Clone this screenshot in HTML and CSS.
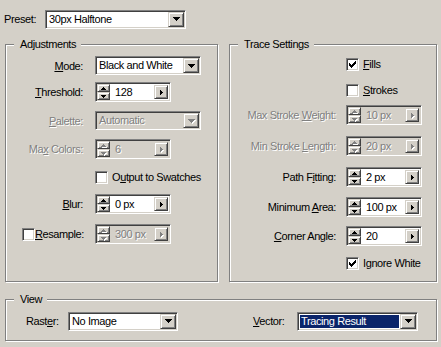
FILE: index.html
```html
<!DOCTYPE html>
<html>
<head>
<meta charset="utf-8">
<link rel="stylesheet" href="styles.css">
</head>
<body>
<div class="dlg">
  <div class="preset-row">
    <span class="lbl">Preset:</span>
    <div class="combo"><span class="combo-text">30px Halftone</span><span class="btn combo-btn"><svg width="7" height="4" viewBox="0 0 7 4"><path d="M0 0h7v1H0zM1 1h5v1H1zM2 2h3v1H2zM3 3h1v1H3z"/></svg></span></div>
  </div>

  <div class="groups">
    <div class="group adj">
      <span class="gtitle">Adjustments</span>
      <div class="adj-grid">
        <span class="lbl r"><u>M</u>ode:</span>
        <div class="combo"><span class="combo-text">Black and White</span><span class="btn combo-btn"><svg width="7" height="4" viewBox="0 0 7 4"><path d="M0 0h7v1H0zM1 1h5v1H1zM2 2h3v1H2zM3 3h1v1H3z"/></svg></span></div>

        <span class="lbl r"><u>T</u>hreshold:</span>
        <div class="spin"><div class="spin-ud"><span class="btn sbtn"><svg width="5" height="3" viewBox="0 0 5 3"><path d="M2 0h1v1H2zM1 1h3v1H1zM0 2h5v1H0z"/></svg></span><span class="btn sbtn"><svg width="5" height="3" viewBox="0 0 5 3"><path d="M0 0h5v1H0zM1 1h3v1H1zM2 2h1v1H2z"/></svg></span></div><span class="spin-val">128</span><span class="btn spin-btn"><svg width="3" height="5" viewBox="0 0 3 5"><path d="M0 0h1v5H0zM1 1h1v3H1zM2 2h1v1H2z"/></svg></span></div>

        <span class="lbl r dis"><u>P</u>alette:</span>
        <div class="combo disabled"><span class="combo-text">Automatic</span><span class="btn combo-btn"><svg width="7" height="4" viewBox="0 0 7 4"><path d="M0 0h7v1H0zM1 1h5v1H1zM2 2h3v1H2zM3 3h1v1H3z"/></svg></span></div>

        <span class="lbl r dis">Ma<u>x</u> Colors:</span>
        <div class="spin disabled"><div class="spin-ud"><span class="btn sbtn"><svg width="5" height="3" viewBox="0 0 5 3"><path d="M2 0h1v1H2zM1 1h3v1H1zM0 2h5v1H0z"/></svg></span><span class="btn sbtn"><svg width="5" height="3" viewBox="0 0 5 3"><path d="M0 0h5v1H0zM1 1h3v1H1zM2 2h1v1H2z"/></svg></span></div><span class="spin-val">6</span><span class="btn spin-btn"><svg width="3" height="5" viewBox="0 0 3 5"><path d="M0 0h1v5H0zM1 1h1v3H1zM2 2h1v1H2z"/></svg></span></div>

        <span></span>
        <div class="chkrow"><span class="chk"></span><span class="nowrap">O<u>u</u>tput to Swatches</span></div>

        <span class="lbl r"><u>B</u>lur:</span>
        <div class="spin"><div class="spin-ud"><span class="btn sbtn"><svg width="5" height="3" viewBox="0 0 5 3"><path d="M2 0h1v1H2zM1 1h3v1H1zM0 2h5v1H0z"/></svg></span><span class="btn sbtn"><svg width="5" height="3" viewBox="0 0 5 3"><path d="M0 0h5v1H0zM1 1h3v1H1zM2 2h1v1H2z"/></svg></span></div><span class="spin-val">0 px</span><span class="btn spin-btn"><svg width="3" height="5" viewBox="0 0 3 5"><path d="M0 0h1v5H0zM1 1h1v3H1zM2 2h1v1H2z"/></svg></span></div>

        <div class="lbl resample"><span class="chk"></span><span><u>R</u>esample:</span></div>
        <div class="spin disabled"><div class="spin-ud"><span class="btn sbtn"><svg width="5" height="3" viewBox="0 0 5 3"><path d="M2 0h1v1H2zM1 1h3v1H1zM0 2h5v1H0z"/></svg></span><span class="btn sbtn"><svg width="5" height="3" viewBox="0 0 5 3"><path d="M0 0h5v1H0zM1 1h3v1H1zM2 2h1v1H2z"/></svg></span></div><span class="spin-val">300 px</span><span class="btn spin-btn"><svg width="3" height="5" viewBox="0 0 3 5"><path d="M0 0h1v5H0zM1 1h1v3H1zM2 2h1v1H2z"/></svg></span></div>
      </div>
    </div>

    <div class="group trace">
      <span class="gtitle">Trace Settings</span>
      <div class="trace-grid">
        <span></span>
        <div class="chkrow"><span class="chk"><svg width="7" height="7" viewBox="0 0 7 7"><path d="M6 0h1v1H6zM5 1h2v1H5zM0 2h1v1H0zM4 2h3v1H4zM0 3h2v1H0zM3 3h3v1H3zM0 4h5v1H0zM1 5h3v1H1zM2 6h1v1H2z"/></svg></span><span><u>F</u>ills</span></div>

        <span></span>
        <div class="chkrow"><span class="chk"></span><span><u>S</u>trokes</span></div>

        <span class="lbl r dis">Max Stroke <u>W</u>eight:</span>
        <div class="spin disabled"><div class="spin-ud"><span class="btn sbtn"><svg width="5" height="3" viewBox="0 0 5 3"><path d="M2 0h1v1H2zM1 1h3v1H1zM0 2h5v1H0z"/></svg></span><span class="btn sbtn"><svg width="5" height="3" viewBox="0 0 5 3"><path d="M0 0h5v1H0zM1 1h3v1H1zM2 2h1v1H2z"/></svg></span></div><span class="spin-val">10 px</span><span class="btn spin-btn"><svg width="3" height="5" viewBox="0 0 3 5"><path d="M0 0h1v5H0zM1 1h1v3H1zM2 2h1v1H2z"/></svg></span></div>

        <span class="lbl r dis">Min Stroke <u>L</u>ength:</span>
        <div class="spin disabled"><div class="spin-ud"><span class="btn sbtn"><svg width="5" height="3" viewBox="0 0 5 3"><path d="M2 0h1v1H2zM1 1h3v1H1zM0 2h5v1H0z"/></svg></span><span class="btn sbtn"><svg width="5" height="3" viewBox="0 0 5 3"><path d="M0 0h5v1H0zM1 1h3v1H1zM2 2h1v1H2z"/></svg></span></div><span class="spin-val">20 px</span><span class="btn spin-btn"><svg width="3" height="5" viewBox="0 0 3 5"><path d="M0 0h1v5H0zM1 1h1v3H1zM2 2h1v1H2z"/></svg></span></div>

        <span class="lbl r">Path F<u>i</u>tting:</span>
        <div class="spin"><div class="spin-ud"><span class="btn sbtn"><svg width="5" height="3" viewBox="0 0 5 3"><path d="M2 0h1v1H2zM1 1h3v1H1zM0 2h5v1H0z"/></svg></span><span class="btn sbtn"><svg width="5" height="3" viewBox="0 0 5 3"><path d="M0 0h5v1H0zM1 1h3v1H1zM2 2h1v1H2z"/></svg></span></div><span class="spin-val">2 px</span><span class="btn spin-btn"><svg width="3" height="5" viewBox="0 0 3 5"><path d="M0 0h1v5H0zM1 1h1v3H1zM2 2h1v1H2z"/></svg></span></div>

        <span class="lbl r">Minimum <u>A</u>rea:</span>
        <div class="spin"><div class="spin-ud"><span class="btn sbtn"><svg width="5" height="3" viewBox="0 0 5 3"><path d="M2 0h1v1H2zM1 1h3v1H1zM0 2h5v1H0z"/></svg></span><span class="btn sbtn"><svg width="5" height="3" viewBox="0 0 5 3"><path d="M0 0h5v1H0zM1 1h3v1H1zM2 2h1v1H2z"/></svg></span></div><span class="spin-val">100 px</span><span class="btn spin-btn"><svg width="3" height="5" viewBox="0 0 3 5"><path d="M0 0h1v5H0zM1 1h1v3H1zM2 2h1v1H2z"/></svg></span></div>

        <span class="lbl r"><u>C</u>orner Angle:</span>
        <div class="spin"><div class="spin-ud"><span class="btn sbtn"><svg width="5" height="3" viewBox="0 0 5 3"><path d="M2 0h1v1H2zM1 1h3v1H1zM0 2h5v1H0z"/></svg></span><span class="btn sbtn"><svg width="5" height="3" viewBox="0 0 5 3"><path d="M0 0h5v1H0zM1 1h3v1H1zM2 2h1v1H2z"/></svg></span></div><span class="spin-val">20</span><span class="btn spin-btn"><svg width="3" height="5" viewBox="0 0 3 5"><path d="M0 0h1v5H0zM1 1h1v3H1zM2 2h1v1H2z"/></svg></span></div>

        <span></span>
        <div class="chkrow"><span class="chk"><svg width="7" height="7" viewBox="0 0 7 7"><path d="M6 0h1v1H6zM5 1h2v1H5zM0 2h1v1H0zM4 2h3v1H4zM0 3h2v1H0zM3 3h3v1H3zM0 4h5v1H0zM1 5h3v1H1zM2 6h1v1H2z"/></svg></span><span class="nowrap">I<u>g</u>nore White</span></div>
      </div>
    </div>
  </div>

  <div class="group view">
    <span class="gtitle">View</span>
    <div class="view-row">
      <span class="lbl">Rast<u>e</u>r:</span>
      <div class="combo"><span class="combo-text">No Image</span><span class="btn combo-btn"><svg width="7" height="4" viewBox="0 0 7 4"><path d="M0 0h7v1H0zM1 1h5v1H1zM2 2h3v1H2zM3 3h1v1H3z"/></svg></span></div>
      <span></span>
      <span class="lbl"><u>V</u>ector:</span>
      <div class="combo sel"><span class="combo-text"><span class="hl">Tracing Result</span></span><span class="btn combo-btn"><svg width="7" height="4" viewBox="0 0 7 4"><path d="M0 0h7v1H0zM1 1h5v1H1zM2 2h3v1H2zM3 3h1v1H3z"/></svg></span></div>
    </div>
  </div>
</div>
</body>
</html>
```

FILE: styles.css
```css
* { box-sizing: border-box; }
html, body { margin: 0; padding: 0; }
body {
  width: 441px;
  height: 347px;
  overflow: hidden;
  background: #d4d0c8;
  color: #000;
  font-family: "Liberation Sans", Arial, sans-serif;
  font-size: 11px;
  letter-spacing: -0.4px;
}
u { text-decoration: underline; text-underline-offset: 1px; }
.nowrap { white-space: nowrap; }
.dlg { padding-top: 9px; }

.preset-row {
  display: grid;
  grid-template-columns: 41px 141px;
  padding-left: 4px;
  align-items: center;
  height: 19px;
}

.groups {
  display: flex;
  gap: 11px;
  margin-top: 16px;
  padding-left: 5px;
}
.group {
  position: relative;
  border: 1px solid #808080;
  box-shadow: inset 1px 1px 0 #fff, 1px 1px 0 #fff;
}
.adj { width: 213px; height: 238px; }
.trace { width: 208px; height: 238px; }
.view { width: 432px; height: 42px; margin: 17px 0 0 5px; }

.gtitle {
  position: absolute;
  left: 8px;
  top: -8px;
  padding: 0 5px 0 6px;
  line-height: 14px;
  background: #d4d0c8;
  white-space: nowrap;
}

.lbl { white-space: nowrap; height: 20px; line-height: 20px; }
.lbl.r { text-align: right; }
.dis { color: #808080; text-shadow: 1px 1px 0 #fff; }

.adj-grid {
  display: grid;
  grid-template-columns: 77px 106px;
  column-gap: 12px;
  grid-template-rows: 26px 29px 28px 28px 27px 30px 20px;
  padding-top: 11px;
  align-items: start;
}
.trace-grid {
  display: grid;
  grid-template-columns: 106px 76px;
  column-gap: 10px;
  grid-template-rows: 26px 25px 31px 31px 30px 29px 27px 20px;
  padding-top: 9px;
  align-items: start;
}
.view-row {
  display: grid;
  grid-template-columns: 42px 110px 75px 44px 121px;
  padding: 11px 0 0 20px;
  align-items: center;
}

.resample {
  display: flex;
  align-items: center;
  justify-content: space-between;
  padding-left: 16px;
}

/* sunken field */
.combo, .spin, .chk {
  border: 1px solid;
  border-color: #808080 #fff #fff #808080;
  box-shadow: inset 1px 1px 0 #404040, inset -1px -1px 0 #d4d0c8;
  padding: 1px;
  background: #fff;
}

/* raised button */
.btn {
  display: flex;
  align-items: center;
  justify-content: center;
  background: #d4d0c8;
  border: 1px solid;
  border-color: #d4d0c8 #404040 #404040 #d4d0c8;
  box-shadow: inset 1px 1px 0 #fff, inset -1px -1px 0 #808080;
}
.btn svg { display: block; fill: #000; }

.combo {
  display: flex;
  height: 19px;
}
.combo-text {
  flex: 1;
  min-width: 0;
  padding-left: 2px;
  line-height: 15px;
  white-space: nowrap;
  overflow: hidden;
}
.combo-btn { width: 16px; height: 15px; }
.combo.disabled, .spin.disabled { background: #d4d0c8; }
.disabled .combo-text, .disabled .spin-val { color: #808080; text-shadow: 1px 1px 0 #fff; }
.disabled .btn svg { fill: #808080; filter: drop-shadow(1px 1px 0 #fff); }

.combo.sel .combo-text { padding: 1px; }
.hl {
  display: block;
  height: 13px;
  line-height: 13px;
  padding-left: 1px;
  background: #0a246a;
  color: #fff;
}

.spin {
  display: flex;
  width: 76px;
  height: 20px;
}
.spin-ud {
  display: flex;
  flex-direction: column;
  width: 13px;
}
.sbtn { width: 13px; height: 8px; }
.spin-val {
  flex: 1;
  padding-left: 5px;
  line-height: 16px;
  white-space: nowrap;
}
.spin-btn { width: 14px; height: 14px; margin: 1px 1px 1px 0; }

.chkrow {
  display: flex;
  align-items: center;
  gap: 4px;
  height: 20px;
  white-space: nowrap;
}
.chk {
  display: flex;
  align-items: center;
  justify-content: center;
  width: 13px;
  height: 13px;
  flex: none;
}
.chk svg { display: block; fill: #000; }
```
